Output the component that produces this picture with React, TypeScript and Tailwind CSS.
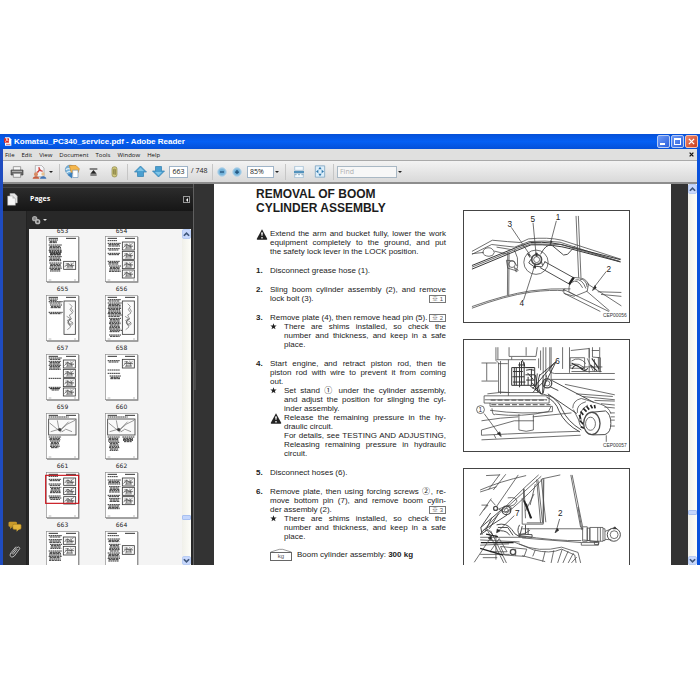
import React from "react";

type Box = [number, number, number, number];
type Picture = { box: Box; kind?: "detail" | "wide" | "tall" };
type Page = { id: number; text: Box[]; pics: Picture[]; current?: boolean };

const pages: Page[] = [
  { id: 655, text: [[8, 12, 28, 10], [8, 27, 40, 18], [10, 47, 38, 10], [10, 49, 38, 10], [8, 62, 40, 16], [10, 81, 38, 26]], pics: [{ box: [53, 76, 36, 24] }] },
  { id: 656, text: [[8, 14, 28, 4], [8, 22, 40, 10], [8, 38, 36, 6], [8, 52, 38, 8], [8, 76, 36, 10], [12, 90, 36, 20]], pics: [{ box: [52, 18, 36, 24] }, { box: [52, 46, 36, 24] }, { box: [52, 74, 36, 24] }, { box: [52, 102, 36, 24] }] },
  { id: 657, text: [[8, 12, 28, 6], [8, 20, 42, 6], [12, 30, 36, 12], [8, 52, 42, 8]], pics: [{ box: [54, 18, 34, 100], kind: "tall" }] },
  { id: 658, text: [[8, 14, 40, 8], [8, 24, 42, 44], [12, 70, 36, 44], [12, 120, 36, 6]], pics: [{ box: [52, 18, 36, 100], kind: "tall" }] },
  { id: 659, text: [[8, 12, 40, 8], [8, 22, 38, 12], [8, 34, 38, 14], [8, 73, 38, 3], [8, 100, 36, 6], [14, 104, 28, 8]], pics: [{ box: [52, 18, 36, 24] }, { box: [52, 46, 36, 24] }, { box: [52, 74, 36, 24] }, { box: [52, 102, 36, 24] }] },
  { id: 660, text: [[8, 20, 36, 6], [8, 48, 36, 3], [8, 58, 38, 4], [14, 66, 34, 10]], pics: [{ box: [52, 16, 36, 26] }] },
  { id: 661, text: [[8, 12, 60, 3], [8, 72, 38, 10], [12, 84, 30, 22]], pics: [{ box: [8, 18, 82, 48], kind: "wide" }] },
  { id: 662, text: [[8, 12, 60, 3], [8, 72, 36, 14], [12, 88, 32, 28], [52, 72, 36, 10], [54, 82, 30, 8]], pics: [{ box: [8, 18, 82, 48], kind: "wide" }] },
  { id: 663, text: [[8, 13, 28, 4], [8, 22, 38, 8], [8, 36, 38, 8], [12, 46, 34, 20], [8, 72, 36, 6], [10, 78, 36, 8]], pics: [{ box: [53, 18, 36, 22] }, { box: [53, 46, 36, 22] }, { box: [53, 74, 36, 22] }], current: true },
  { id: 664, text: [[8, 14, 30, 4], [8, 24, 40, 14], [12, 44, 34, 20], [8, 70, 38, 8], [12, 80, 34, 10], [8, 98, 38, 14]], pics: [{ box: [52, 18, 36, 24] }, { box: [52, 46, 36, 24] }, { box: [52, 74, 36, 24] }] },
  { id: 665, text: [[8, 14, 40, 8], [8, 26, 40, 10], [12, 40, 36, 14], [8, 60, 40, 30]], pics: [{ box: [52, 18, 36, 22] }, { box: [52, 46, 36, 26] }] },
  { id: 666, text: [[8, 14, 34, 4], [8, 24, 38, 10], [12, 40, 34, 24], [8, 66, 38, 26]], pics: [{ box: [52, 44, 36, 26] }] },
];

function TextBlock({ box }: { box: Box }) {
  const [x, y, w, h] = box;
  const rows = Math.max(1, Math.round(h / 4));
  return (
    <>
      {Array.from({ length: rows }, (_, i) => (
        <path
          key={i}
          d={`M${x + ((i * 3) % 4)} ${y + i * 4}h${w - ((i * 7) % 9)}`}
          stroke="#2c2c2c"
          strokeWidth="2.9"
          strokeDasharray={`${5 + (i % 3) * 2} 1.3`}
        />
      ))}
    </>
  );
}

function Scribble({ box, kind = "detail" }: Picture) {
  const [x, y, w, h] = box;
  return (
    <g fill="none" stroke="#444" strokeWidth="1.6">
      <rect x={x} y={y} width={w} height={h} fill="#fafafa" stroke="#333" strokeWidth="2.4" />
      {kind === "wide" && (
        <path d={`M${x + 3} ${y + 12}l22 18 10 4 20-18 24-12M${x + 6} ${y + 38}l28-8 6 8 10-6M${x + 26} ${y + 4}l4 22M${x + 30} ${y + 26}l6 14M${x + 60} ${y + 8}l-24 24M${x + 50} ${y + 30}l20 8`} />
      )}
      {kind === "wide" && <circle cx={x + 33} cy={y + 32} r="4" fill="#333" />}
      {kind === "tall" && (
        <path d={`M${x + 16} ${y + 8}l8 8-6 10 8 10-10 6 6 12-12 4 8 12 8-6M${x + 8} ${y + 46}l10 6-6 12 8 14-10 8M${x + 22} ${y + 22}l6 10M${x + 18} ${y + 60}c12 4 10 14 0 12s-6-14 4-18`} />
      )}
      {kind === "detail" && (
        <path d={`M${x + 3} ${y + h - 7}l9-9 8 4 11-8M${x + 6} ${y + 7}h10l4 6h12M${x + 8} ${y + h - 4}h20M${x + 13} ${y + 5}v${h - 10}M${x + 22} ${y + 4}l4 ${h - 9}M${x + 5} ${y + 12}h26M${x + 10} ${y + h - 8}h18`} />
      )}
    </g>
  );
}

function Thumbnail({ page }: { page: Page }) {
  return (
    <button className="flex w-[33px] flex-col items-center" aria-label={`Page ${page.id}`}>
      <svg viewBox="0 0 99 138" className="h-[46px] w-[33px] overflow-visible">
        <rect x="3" y="3" width="97" height="137" fill="#777" />
        <rect x="1" y="1" width="96" height="136" fill="#fff" stroke="#8a8a8a" strokeWidth="2" />
        <path d="M8 7h28M60 7h30" stroke="#333" strokeWidth="3" />
        <path d="M8 132h8M84 132h6" stroke="#999" strokeWidth="2" />
        {page.text.map((box, i) => <TextBlock key={i} box={box} />)}
        {page.pics.map((pic, i) => <Scribble key={i} {...pic} />)}
        {page.current && <rect x="-1" y="10" width="99" height="84" fill="none" stroke="#c8141c" strokeWidth="3.5" />}
      </svg>
      <span className="h-[13px] font-['DejaVu_Sans',sans-serif] text-[6px] leading-[14px] text-[#222]">{page.id}</span>
    </button>
  );
}

function Scrollbar({ label }: { label: string }) {
  return (
    <div role="scrollbar" aria-label={label} aria-controls="document" aria-valuenow={88} className="flex w-[9px] shrink-0 flex-col bg-gradient-to-r from-[#f0f0ea] to-[#fdfdf8]">
      <button aria-label={`${label} up`} className="flex h-[10px] items-center justify-center rounded-[2px] border border-[#b8ccf4] bg-[#c8d8fc]">
        <svg viewBox="0 0 8 6" className="h-[6px] w-[7px]"><path d="M1 5l3-3 3 3" fill="none" stroke="#40587c" strokeWidth="2" /></svg>
      </button>
      <div className="grow-[31]" />
      <div className="h-[5px] rounded-[1px] border border-[#a8c0f0] bg-[#c4d6fc]" />
      <div className="grow-4" />
      <button aria-label={`${label} down`} className="flex h-[9px] items-center justify-center rounded-[2px] border border-[#b8ccf4] bg-[#c8d8fc]">
        <svg viewBox="0 0 8 6" className="h-[6px] w-[7px]"><path d="M1 1l3 3 3-3" fill="none" stroke="#40587c" strokeWidth="2" /></svg>
      </button>
    </div>
  );
}

function Divider() {
  return <span className="h-[16px] w-px bg-[#c6c6c6]" />;
}

function Caret() {
  return <span className="h-0 w-0 border-x-2 border-t-2 border-x-transparent border-t-[#222]" />;
}

function Arrow({ down = false }: { down?: boolean }) {
  return (
    <svg viewBox="0 0 26 26" className={down ? "h-[13px] w-[13px] rotate-180" : "h-[13px] w-[13px]"}>
      <path d="M13 2L25 14h-6v9H7v-9H1z" fill="#4a9fd0" stroke="#3583b3" strokeWidth="1.5" strokeLinejoin="round" />
      <path d="M13 5l7 7H6z" fill="#7fc4e6" />
    </svg>
  );
}

function ZoomIcon({ plus = false }: { plus?: boolean }) {
  return (
    <svg viewBox="0 0 20 20" className="h-[10px] w-[10px]">
      <circle cx="10" cy="10" r="8.5" fill="#86bde0" stroke="#b5d3e8" strokeWidth="2" />
      <circle cx="10" cy="10" r="5.5" fill="#6fb0d8" />
      <path d={plus ? "M6 10h8M10 6v8" : "M6 10h8"} stroke="#1f4f78" strokeWidth="2.5" />
    </svg>
  );
}

function Toolbar() {
  return (
    <div className="flex h-[23px] shrink-0 items-center border-b-2 border-b-[#8d8d8d] bg-gradient-to-b from-[#f3f3f3] to-[#d9d9d9] pl-[7px] text-[7px] text-[#222]">
      <button aria-label="Print">
        <svg viewBox="0 0 42 36" className="h-[12px] w-[14px]">
          <path d="M10 2h22v12H10z" fill="#f8f8f8" stroke="#777" strokeWidth="2" />
          <path d="M3 12h36v15H3z" fill="#666" stroke="#444" strokeWidth="2" />
          <path d="M6 16h30" stroke="#bbb" strokeWidth="3" />
          <path d="M10 22h22v12H10z" fill="#eee" stroke="#777" strokeWidth="2" />
        </svg>
      </button>
      <button aria-label="Collaborate" className="ml-[8px] flex items-center gap-[2px]">
        <svg viewBox="0 0 45 42" className="h-[14px] w-[15px]">
          <path d="M10 1h18l8 8v26H10z" fill="#f4f4f7" stroke="#999" strokeWidth="2" />
          <path d="M14 22c10-2 8-12 7-14s2 12 11 10" fill="none" stroke="#d0453d" strokeWidth="4" />
          <circle cx="12" cy="28" r="6" fill="#d98b62" />
          <path d="M2 41c0-10 20-10 20 0z" fill="#c65d3e" />
          <circle cx="33" cy="27" r="5" fill="#e8c28f" />
          <path d="M24 41c0-10 19-10 19 0z" fill="#3f73b5" />
        </svg>
        <Caret />
      </button>
      <span className="ml-[6px] flex"><Divider /></span>
      <button aria-label="Create PDF online" className="ml-[4px]">
        <svg viewBox="0 0 48 44" className="h-[15px] w-[16px]">
          <circle cx="18" cy="17" r="14" fill="#79b3dc" stroke="#5b8eb5" strokeWidth="2" />
          <path d="M6 17c8-10 16 4 24-6M8 26c6-8 14-4 20-2" stroke="#d8edf7" strokeWidth="4" fill="none" />
          <path d="M16 4h20l10 10-4 12H22z" fill="#f5b64b" stroke="#c88424" strokeWidth="2" />
          <path d="M26 18h16v22H26z" fill="#fff" stroke="#6e93b6" strokeWidth="2" />
          <path d="M10 32l14-7v18z" fill="#3b80bd" />
        </svg>
      </button>
      <button aria-label="Review toolbar" className="ml-[9px]">
        <svg viewBox="0 0 27 24" className="h-[8px] w-[9px]"><path d="M2 3h23M4 21h19" stroke="#222" strokeWidth="3.5" /><path d="M13.5 6L23 17H4z" fill="#222" /></svg>
      </button>
      <button aria-label="Attachments" className="ml-[13px]">
        <svg viewBox="0 0 20 34" className="h-[12px] w-[7px]">
          <rect x="3" y="2" width="14" height="29" rx="6" fill="#d3ca80" stroke="#8a8440" strokeWidth="2" />
          <path d="M8 24V10q2-4 4 0v15" fill="none" stroke="#57531e" strokeWidth="2" />
        </svg>
      </button>
      <span className="ml-[9px] flex"><Divider /></span>
      <button aria-label="Previous page" className="ml-[6px]"><Arrow /></button>
      <button aria-label="Next page" className="ml-[5px]"><Arrow down /></button>
      <input aria-label="Page number" defaultValue="663" className="ml-[4px] h-[12px] w-[19px] border border-[#9fb4c8] bg-white text-center text-[7px]" />
      <span className="ml-[3px] w-[17px] whitespace-nowrap">/ 748</span>
      <span className="ml-[4px] flex"><Divider /></span>
      <button aria-label="Zoom out" className="ml-[4px]"><ZoomIcon /></button>
      <button aria-label="Zoom in" className="ml-[5px]"><ZoomIcon plus /></button>
      <select aria-label="Zoom level" className="ml-[5px] h-[12px] w-[27px] appearance-none border border-[#9fb4c8] bg-white pl-[2px] text-[7px]">
        <option>85%</option>
      </select>
      <span className="ml-[1px] flex"><Caret /></span>
      <span className="ml-[6px] flex"><Divider /></span>
      <button aria-label="Fit width" className="ml-[7px]">
        <svg viewBox="0 0 36 36" className="h-[12px] w-[12px]">
          <path d="M5 1h26v12H5zM5 22h26v13H5z" fill="#f3f9fd" stroke="#8fb2cc" strokeWidth="2" />
          <path d="M3 18h30" stroke="#3783b5" strokeWidth="5" />
          <path d="M5 26h26" stroke="#5c86a3" strokeWidth="2" strokeDasharray="6 4" />
        </svg>
      </button>
      <button aria-label="Fit page" className="ml-[9px]">
        <svg viewBox="0 0 36 38" className="h-[13px] w-[12px]">
          <path d="M4 2h28v34H4z" fill="#dceefa" stroke="#7fa6c2" strokeWidth="2.5" />
          <path d="M18 5l5 7H13zM18 33l5-7H13zM6 19l7-5v10zM30 19l-7-5v10z" fill="#2f79ae" />
        </svg>
      </button>
      <span className="ml-[7px] flex"><Divider /></span>
      <input aria-label="Find" placeholder="Find" className="ml-[3px] h-[12px] w-[60px] border border-[#a9b8c4] bg-[#f7f7f7] pl-[2px] text-[7px] placeholder:text-[#b0b0b0]" />
      <span className="ml-[1px] flex"><Caret /></span>
    </div>
  );
}

function Lines({ lines, end }: { lines: string[]; end?: React.ReactNode }) {
  return (
    <p>
      {lines.map((line, i) =>
        i < lines.length - 1 ? (
          <span key={i} className="block whitespace-nowrap [text-align-last:justify]">{line} </span>
        ) : (
          <span key={i} className="flex items-center justify-between whitespace-nowrap">{line}{end}</span>
        ),
      )}
    </p>
  );
}

function Tag({ n }: { n: number }) {
  return <span className="flex h-[8px] w-[17px] items-center justify-center border border-[#777] text-[6px] leading-none text-[#555]">※ {n}</span>;
}

function Step({ n, children }: { n: number; children: React.ReactNode }) {
  return (
    <li className="flex">
      <b className="w-[14px] shrink-0">{n}.</b>
      <div className="flex-1">{children}</div>
    </li>
  );
}

function Sub({ mark, children }: { mark: React.ReactNode; children: React.ReactNode }) {
  return (
    <div className="flex">
      <span className="w-[14px] shrink-0">{mark}</span>
      <div className="flex-1">{children}</div>
    </div>
  );
}

function Star() {
  return <svg viewBox="0 0 20 20" className="mt-px h-[7px] w-[7px]"><path d="M10 1l2.3 6.2H19l-5.3 4 2 6.8L10 14l-5.7 4 2-6.8L1 7.200h6.700z" fill="#222" /></svg>;
}

function Warning() {
  return (
    <svg viewBox="0 0 36 34" className="h-[11px] w-[12px]">
      <path d="M18 1l16 29q1 3-2 3H4q-3 0-2-3z" fill="#222" />
      <path d="M15 11h6l-2 11h-2zM16 25h4v4h-4z" fill="#fff" />
    </svg>
  );
}

const installNote = ["There are shims installed, so check the", "number and thickness, and keep in a safe", "place."];

function Procedure() {
  return (
    <article className="w-[190px] shrink-0 pt-[3px] text-[8px] leading-[9px] text-[#222]">
      <h1 className="text-[12px] leading-[14px] font-bold text-[#1c1c1c]">REMOVAL OF BOOM<br />CYLINDER ASSEMBLY</h1>
      <div className="mt-[14px] flex">
        <span className="w-[14px] shrink-0"><Warning /></span>
        <div className="flex-1"><Lines lines={["Extend the arm and bucket fully, lower the work", "equipment completely to the ground, and put", "the safety lock lever in the LOCK position."]} /></div>
      </div>
      <ol className="mt-[10px] flex flex-col gap-[10px]">
        <Step n={1}><Lines lines={["Disconnect grease hose (1)."]} /></Step>
        <Step n={2}><Lines lines={["Sling boom cylinder assembly (2), and remove", "lock bolt (3)."]} end={<Tag n={1} />} /></Step>
        <Step n={3}>
          <Lines lines={["Remove plate (4), then remove head pin (5)."]} end={<Tag n={2} />} />
          <Sub mark={<Star />}><Lines lines={installNote} /></Sub>
        </Step>
        <Step n={4}>
          <Lines lines={["Start engine, and retract piston rod, then tie", "piston rod with wire to prevent it from coming", "out."]} />
          <Sub mark={<Star />}><Lines lines={["Set stand ① under the cylinder assembly,", "and adjust the position for slinging the cyl-", "inder assembly."]} /></Sub>
          <Sub mark={<Warning />}>
            <Lines lines={["Release the remaining pressure in the hy-", "draulic circuit."]} />
            <Lines lines={["For details, see TESTING AND ADJUSTING,", "Releasing remaining pressure in hydraulic", "circuit."]} />
          </Sub>
        </Step>
        <Step n={5}><Lines lines={["Disconnect hoses (6)."]} /></Step>
        <Step n={6}>
          <Lines lines={["Remove plate, then using forcing screws ②, re-", "move bottom pin (7), and remove boom cylin-", "der assembly (2)."]} end={<Tag n={3} />} />
          <Sub mark={<Star />}><Lines lines={installNote} /></Sub>
        </Step>
      </ol>
      <p className="mt-[7px] flex items-center pl-[14px]">
        <span className="flex w-[22px] flex-col">
          <svg viewBox="0 0 66 12" className="h-[4px]"><path d="M2 12L28 4h10l26 8" fill="none" stroke="#666" strokeWidth="2" /></svg>
          <span className="flex h-[9px] items-center justify-center border border-[#666] text-[6px] text-[#555]">kg</span>
        </span>
        <span className="ml-[5px]">Boom cylinder assembly: <b>300 kg</b></span>
      </p>
    </article>
  );
}

const label = "fill-[#222] stroke-none text-[25px]";
const caption = "fill-[#333] stroke-none text-[15px]";
const figure = "h-[113px] w-full shrink-0 border border-[#444]";

function HeadPinFigure() {
  return (
    <svg viewBox="25 30 498 338" role="img" aria-label="Head pin" className={figure} fill="none" stroke="#4a4a4a" strokeWidth="2.4">
      <path d="M47 153l62-34q50 5 86 7l24-11q60-6 102 4l180 58M47 162l60-30 70 8 44-17q50-4 94 2l184 60" />
      <path d="M47 196l138-56 40-14q70-4 124 14l150 38M47 207l140-58 40-16q70-2 120 12l152 40" stroke="#333" strokeWidth="3" />
      <path d="M47 201l140-57 40-14 90 2 182 52" />
      <path d="M80 157q2-14 16-15t19 14q-2 12-16 12-16-1-19-11zM47 160l36-4M115 152l40 10M122 140l48 8" />
      <path d="M176 148q14 24 10 50M156 156l-1 130M160 156l-1 130M152 180l22 2 12 18-4 12-26-8zM176 202l12 8-6 6z" />
      <circle cx="169" cy="192" r="10" /><circle cx="242" cy="186" r="37" />
      <circle cx="244" cy="178" r="15" strokeWidth="5" /><circle cx="244" cy="178" r="9" />
      <path d="M230 172l-10 16 14 10 26 2 10-16M262 196l-4-14M268 184l90 50M254 202l92 52M256 162q16-32 34-28l36 30 12-2 24-26" strokeWidth="3" />
      <path d="M364 45l8 188M371 45l8 188M354 232l20 2q18 0 28 18l-4 22-34 14-22-12q0-30 12-44zM350 248q18-14 34 16M362 240q20-6 32 26M376 238q18-2 22 24" />
      <path d="M357 233l-14 20" stroke="#222" strokeWidth="7" />
      <path d="M396 250l106 69M396 274l70 60M324 268l140 68M326 280l112 56M330 266l-6 8 6 8 30 8M47 321q100-36 180-48 60-8 120-6M47 326q100-38 180-49 60-8 104-4M430 276l72 2M440 284l62 6" />
      <path d="M167 80l62 92M233 66l10 104M304 60l-18 68M204 302l36-112M456 214l-40 52" />
      <path d="M222 162l-6-2 8 12M240 158h6l-1 12M287 120l-2 14 6-12M240 192l-6 10 8 2M422 256l-8 16 12-8" fill="#222" />
      <text x="155" y="79" className={label}>3</text><text x="225" y="63" className={label}>5</text><text x="302" y="58" className={label}>1</text><text x="457" y="215" className={label}>2</text><text x="192" y="320" className={label}>4</text>
      <text x="446" y="353" className={caption}>CEP00056</text>
    </svg>
  );
}

function HosesFigure() {
  return (
    <svg viewBox="25 28 498 338" role="img" aria-label="Hoses" className={figure} fill="none" stroke="#4a4a4a" strokeWidth="2.4">
      <path d="M76 98h46M76 153h50M92 98v54M120 50v40l8 8v90M126 50v36M160 50v28h82l4-28M122 88h120M134 92v100M158 88v110M126 100h30M128 186l34 2M168 80v8M212 50v26M250 84v30M256 60v60M264 50v80M272 50v90M284 50v74M288 50v100M323 50v66" />
      <path d="M168 112h70v54h-70zM176 112v54M182 112v54M192 96v76M198 92v74M206 96v70M212 112h24M212 120q12-4 24 0M210 134h28M216 128l18 20M212 150h26M218 140v26M228 116v50M172 124h30M170 140h36M172 156h38M188 104h20M200 88l8 20" stroke="#333" strokeWidth="3" />
      <path d="M284 120q4 10 14 10h184M288 148h194M330 163l152 32M344 50v78M348 60l56-6v28M346 82h44v32h-44zM350 92q24-16 44 8M346 106q30-16 50 18M404 52v76M412 60h22M414 50v30l24 2v44M420 86v38M432 80v42M436 50v76M398 84l18 38M384 110h60M350 124h92" />
      <path d="M350 98l36 18M352 116q10-20 24-4t24 2M412 84l22 32M408 104l20 18" stroke="#333" strokeWidth="3.500" />
      <path d="M303 94l-50 42M303 94l-38 76M300 96l-68 80M246 130l-6 50M240 134l8 54M254 132q-12 30 2 58M264 134l-2 58M274 136l-10 54M224 168l38 26M230 158l28 36M232 188l36-36" stroke="#222" strokeWidth="2.500" />
      <circle cx="276" cy="160" r="14" strokeWidth="4" /><circle cx="276" cy="160" r="8" />
      <path d="M288 150l130 68M278 192l88 60M284 170l26 12M280 196q32 16 42 44 16 36 58 62M274 202q28 12 38 42 18 40 64 64" strokeWidth="3" />
      <path d="M84 198h198v22H84zM86 210h190M102 220v10h190v16q-90 10-190-4M108 236q2 26 10 18 80 10 162-8l8-16M94 192l36-4h120l30 10" />
      <path d="M104 211h170M106 225h180" strokeDasharray="15 6" strokeWidth="3" />
      <path d="M354 236q0-24 26-30l60 18q24 8 30 28M356 240l18 36M368 250q-4-26 26-34M380 274q-12-30 20-48M374 264q-6 30 22 36" />
      <path d="M374 256l4 12M378 246l8 10M386 236l10 10M396 230l8 10M408 226l6 10M420 226l2 10M376 274l10 10M378 292l10 4" stroke="#222" strokeWidth="5" />
      <path d="M412 248l42-4q16 10 16 38t-18 34l-38 1" fill="#fff" strokeWidth="3" />
      <ellipse cx="412" cy="282" rx="25" ry="34" fill="#fff" strokeWidth="4" /><ellipse cx="408" cy="283" rx="15" ry="20" />
      <path d="M76 274q60-10 112-12M232 262l118-12M190 254v48q22 8 44 0v-46M76 318q160-8 298-12M76 332l302-14M114 316l6 12M76 302l100-28h60M364 192l112 8M384 200l98 10M420 212l62 2M440 222l42 4M450 232l32 3M468 250h14M470 262h12M470 272h12M470 290h12M76 302v16M456 318v20" />
      <circle cx="73" cy="240" r="12" /><path d="M84 252l50 68" />
      <path d="M124 312l12 10-4-14z" fill="#222" />
      <text x="67" y="247" className="fill-[#333] stroke-none text-[20px]">1</text><text x="301" y="102" className={label}>6</text>
      <text x="446" y="353" className={caption}>CEP00057</text>
    </svg>
  );
}

function BottomPinFigure() {
  return (
    <svg viewBox="25 40 498 338" role="img" aria-label="Bottom pin" className={figure} fill="none" stroke="#4a4a4a" strokeWidth="2.4">
      <path d="M90 60l42-2M132 56l-34 46M150 56l-38 48M188 58L122 154M72 104q60-26 140-44M72 110l50-16M250 58q-70 60-178 180M258 62L150 160M262 70q-30 36-110 106M316 58l-56 12M70 182l36-52M76 150h20l-14 16M104 134l14 16M128 162l32-12 8 10-20 12zM156 128q26-4 28 10-6 14-22 16" />
      <circle cx="119" cy="160" r="6" strokeWidth="4" /><circle cx="152" cy="166" r="13" strokeWidth="4" /><circle cx="152" cy="166" r="6" />
      <path d="M74 218l72-62M80 228l74-48M104 174l-30 44 4 22M108 188l-20 40M128 176l-28 46M72 240l24-16 14 16" strokeWidth="3" />
      <path d="M204 100v38l24 52M206 100l4 90M200 128v80h64V72M244 72l12 132M248 74l14 128M258 70l14 132M266 70l-2 134h-50M240 86l-16 64M236 116l-26 52" />
      <path d="M206 136l22 54M212 146l14 44" stroke="#222" strokeWidth="5" />
      <path d="M122 210q30-8 46 14 8 16 24 22l8-32M126 218h30l16 24M134 228q20 0 28 14M192 210q-10 18 0 30M210 210v28M218 220v20M190 238l40 2v8l-40-2z" strokeWidth="3" />
      <path d="M200 222h186M224 226q-10 10-34 16 110 18 190 16M200 250l180 14h50M380 264v8h52l2-10-48-6M384 216h14v44h-14zM398 220h8v38h-8zM406 218h40v42h-40zM446 222h6v36h-6M430 218v42M438 218v42M452 230l20-8M452 254l20 2M420 262h12v8h-12z" />
      <circle cx="479" cy="240" r="20" strokeWidth="3" /><circle cx="480" cy="240" r="12" /><path d="M482 216l6 6h-12z" fill="#222" />
      <path d="M348 58l30 160M352 58l32 158M370 156l12 70" />
      <path d="M72 248h140M72 256l120 6M94 226l50 100M104 228l48 98M120 240v76M130 252l24 40h-52zM72 272l88-4M72 300h90M80 310h44M134 276l80 8-8 22-60-4zM180 284v20M190 268q60 28 130 10l50 16 8 32M174 262l60 24q50 14 86-2l40 18 4 24M200 304l70 18M240 286l-8 20M270 290l-8 32M296 288l-8 38M322 284l-14 42M340 290l-16 36M356 296l-16 30M366 308l-16 18" />
      <circle cx="172" cy="293" r="8" strokeWidth="4" /><path d="M72 282l70 20M90 238l36 8M74 264h100" stroke="#222" strokeWidth="4" />
      <path d="M176 182l-50 48M314 192l-12 42M54 324l52-78" />
      <path d="M306 220l-6 14 12-8M124 222l-2 12 12-6M96 250l10-6v12z" fill="#222" />
      <text x="178" y="184" className={label}>7</text><text x="309" y="183" className={label}>2</text>
    </svg>
  );
}

function Sidebar() {
  return (
    <aside className="flex w-[191px] shrink-0 flex-col border-r border-[#606060]">
      <header className="mt-[3px] flex h-[24px] shrink-0 items-center border-t border-[#444] bg-gradient-to-b from-[#2c2c2c] to-[#161616] pr-[3px] pl-[4px]">
        <svg viewBox="0 0 34 40" className="h-[13px] w-[11px]">
          <path d="M9 1h14l9 8v22H9z" fill="#e7e7e7" stroke="#888" strokeWidth="1.500" />
          <path d="M2 9h15l9 8v21H2z" fill="#f8f8f8" stroke="#999" strokeWidth="1.500" /><path d="M17 9v8h9" fill="#bbb" />
        </svg>
        <h2 className="ml-[12px] text-[7px] font-bold text-white">Pages</h2>
        <button aria-label="Collapse panel" className="ml-auto flex h-[7px] w-[7px] items-center justify-center border border-[#999]"><span className="h-0 w-0 border-y-2 border-r-2 border-y-transparent border-r-white" /></button>
      </header>
      <div className="flex min-h-0 flex-1">
        <nav aria-label="Panels" className="flex w-[23px] shrink-0 flex-col items-center justify-end gap-[13px] pb-[6px]">
          <button aria-label="Comments">
            <svg viewBox="0 0 42 34" className="h-[11px] w-[14px]">
              <rect x="1" y="2" width="26" height="16" rx="4" fill="#c99a2a" /><path d="M6 16v9l8-8" fill="#c99a2a" />
              <rect x="14" y="10" width="26" height="16" rx="4" fill="#e3b53c" stroke="#8c6a12" strokeWidth="1.500" /><path d="M26 25v8l8-8" fill="#e3b53c" />
            </svg>
          </button>
          <button aria-label="Attachments panel">
            <svg viewBox="0 0 36 42" className="h-[14px] w-[12px]"><path d="M8 27L23 8q7-5 10 2L16 33q-8 8-13-1 0-5 4-10L21 5M12 29l13-17" fill="none" stroke="#bdbdbd" strokeWidth="3" /></svg>
          </button>
        </nav>
        <div className="flex min-w-0 flex-1 flex-col border-l border-[#222] bg-[#282828] pr-[2px] pl-[2px]">
          <div className="flex h-[18px] shrink-0 items-center gap-[2px] pl-[2px]">
            <button aria-label="Page options" className="flex items-center gap-[2px]">
              <svg viewBox="0 0 30 30" className="h-[10px] w-[10px]">
                <circle cx="11" cy="11" r="6" fill="#888" stroke="#aaa" strokeWidth="4" /><circle cx="20" cy="20" r="6" fill="#777" stroke="#bbb" strokeWidth="4" /><circle cx="20" cy="20" r="2" fill="#333" />
              </svg>
              <span className="h-0 w-0 border-x-2 border-t-2 border-x-transparent border-t-[#ddd]" />
            </button>
          </div>
          <div className="flex min-h-0 flex-1 bg-[#f4f4f4]">
            <div className="min-w-0 flex-1 overflow-hidden pl-[17px]">
              <div className="flex h-[7px] items-end gap-[26px] overflow-hidden font-['DejaVu_Sans',sans-serif] text-[6px] leading-[10px] text-[#222]">
                <span className="w-[33px] text-center">653</span>
                <span className="w-[33px] text-center">654</span>
              </div>
              <div className="flex w-[92px] flex-wrap gap-x-[26px]">
                {pages.map((page) => <Thumbnail key={page.id} page={page} />)}
              </div>
            </div>
            <Scrollbar label="Scroll pages" />
          </div>
        </div>
      </div>
    </aside>
  );
}

export default function App() {
  return (
    <div className="h-screen bg-white pt-[134px] pb-[135px] font-['Open_Sans','Noto_Sans',sans-serif]">
      <div className="flex h-full flex-col overflow-hidden bg-[#333]">
        <header className="flex h-[15px] shrink-0 items-center bg-gradient-to-b from-[#0650d8] via-[#0560f4] to-[#0450d8] pr-[2px] pl-[4px]">
          <svg viewBox="0 0 24 27" className="h-[9px] w-[8px]">
            <path d="M3 1h13l6 6v19H3z" fill="#fff" /><path d="M0 4h15v13H0z" fill="#d92924" /><path d="M3 14q8-3 5-10-1 6 6 8" fill="none" stroke="#fff" strokeWidth="2" /><path d="M6 22h13" stroke="#d92924" strokeWidth="2" />
          </svg>
          <h1 className="ml-[2px] font-['Liberation_Sans',sans-serif] text-[8px] leading-none font-bold whitespace-nowrap text-white">Komatsu_PC340_service.pdf - Adobe Reader</h1>
          <div className="ml-auto flex gap-px">
            <button aria-label="Minimize" className="flex h-[13px] w-[13px] items-end rounded-[2px] border border-[#b8ccf4] bg-gradient-to-br from-[#6f9af6] to-[#2a5fdc] p-[2px]"><span className="h-[2px] w-[5px] bg-white" /></button>
            <button aria-label="Maximize" className="h-[13px] w-[13px] rounded-[2px] border border-[#b8ccf4] bg-gradient-to-br from-[#6f9af6] to-[#2a5fdc] p-[2px]"><span className="block h-full border border-t-2 border-white" /></button>
            <button aria-label="Close" className="flex h-[13px] w-[13px] items-center justify-center rounded-[2px] border border-[#f0c4b8] bg-gradient-to-br from-[#ee8567] to-[#c93c1c]"><svg viewBox="0 0 8 8" className="h-[7px] w-[7px]"><path d="M1 1l6 6M7 1L1 7" stroke="#fff" strokeWidth="1.500" /></svg></button>
          </div>
        </header>
        <div className="flex min-h-0 flex-1 border-r-3 border-l-3 border-r-[#0a52dc] border-l-[#1f4cc0]">
          <div className="flex min-w-0 flex-1 flex-col">
            <nav aria-label="Menu" className="flex h-[12px] shrink-0 items-center gap-[7px] border-b border-[#a9a9a9] bg-[#e0e0df] pr-[3px] pl-[2px] text-[6px] leading-none text-[#111]">
              {["File", "Edit", "View", "Document", "Tools", "Window", "Help"].map((item) => <button key={item}>{item}</button>)}
              <button aria-label="Close document" className="ml-auto"><svg viewBox="0 0 8 8" className="h-[5px] w-[5px]"><path d="M1 1l6 6M7 1L1 7" stroke="#111" strokeWidth="2" /></svg></button>
            </nav>
            <Toolbar />
            <div className="flex min-h-0 flex-1">
              <Sidebar />
              <div className="flex w-[20px] shrink-0 items-center">
                <span className="h-[30px] w-[2px] bg-[#484848]" />
              </div>
              <main id="document" className="flex min-w-0 flex-1 gap-[17px] overflow-hidden bg-white pl-[42px] font-['Liberation_Sans','Noto_Sans_CJK_JP',sans-serif]">
                <Procedure />
                <div className="flex w-[167px] shrink-0 flex-col gap-[16px] pt-[26px]">
                  <HeadPinFigure />
                  <HosesFigure />
                  <BottomPinFigure />
                </div>
              </main>
              <div className="w-[17px] shrink-0" />
              <Scrollbar label="Scroll document" />
            </div>
          </div>
        </div>
      </div>
    </div>
  );
}
